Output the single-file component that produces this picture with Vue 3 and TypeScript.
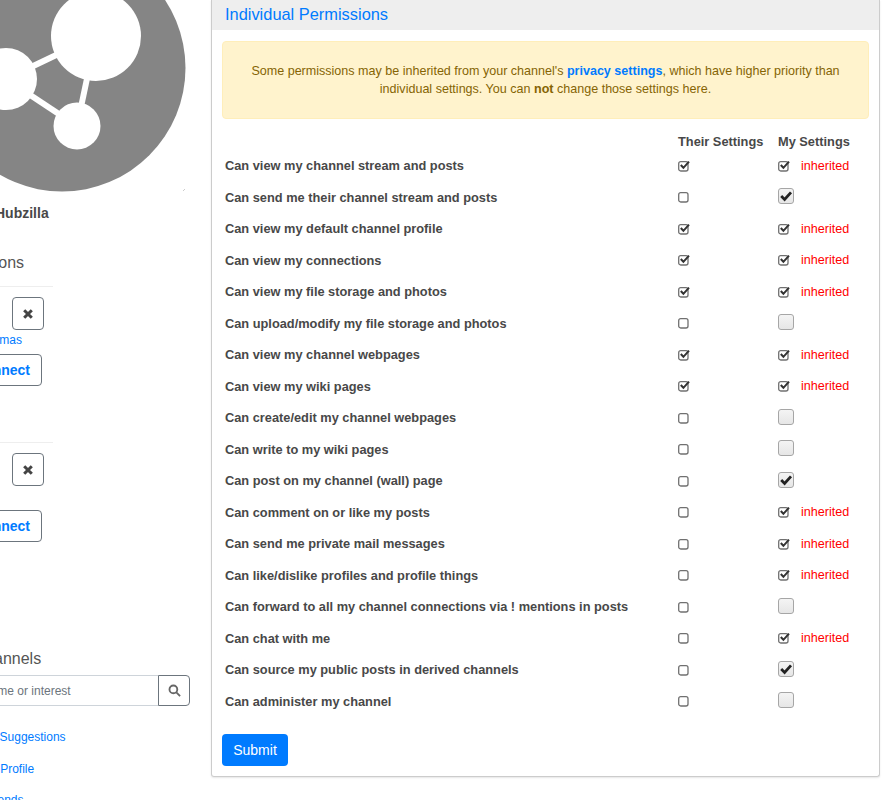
<script setup lang="ts">
// state: 'on' = editable and ticked, 'off' = editable and empty, 'inh' = locked by privacy settings
type MyState = 'on' | 'off' | 'inh'

interface Perm {
  label: string
  their: boolean
  my: MyState
}

const perms: Perm[] = [
  { label: 'Can view my channel stream and posts', their: true, my: 'inh' },
  { label: 'Can send me their channel stream and posts', their: false, my: 'on' },
  { label: 'Can view my default channel profile', their: true, my: 'inh' },
  { label: 'Can view my connections', their: true, my: 'inh' },
  { label: 'Can view my file storage and photos', their: true, my: 'inh' },
  { label: 'Can upload/modify my file storage and photos', their: false, my: 'off' },
  { label: 'Can view my channel webpages', their: true, my: 'inh' },
  { label: 'Can view my wiki pages', their: true, my: 'inh' },
  { label: 'Can create/edit my channel webpages', their: false, my: 'off' },
  { label: 'Can write to my wiki pages', their: false, my: 'off' },
  { label: 'Can post on my channel (wall) page', their: false, my: 'on' },
  { label: 'Can comment on or like my posts', their: false, my: 'inh' },
  { label: 'Can send me private mail messages', their: false, my: 'inh' },
  { label: 'Can like/dislike profiles and profile things', their: false, my: 'inh' },
  { label: 'Can forward to all my channel connections via ! mentions in posts', their: false, my: 'off' },
  { label: 'Can chat with me', their: false, my: 'inh' },
  { label: 'Can source my public posts in derived channels', their: false, my: 'on' },
  { label: 'Can administer my channel', their: false, my: 'off' },
]
</script>

<template>
  <div class="page">
    <aside class="side">
      <svg class="avatar" width="248" height="248" viewBox="0 0 248 248">
        <circle cx="124" cy="124" r="123.5" fill="#858585" />
        <g stroke="#fff" stroke-width="6">
          <line x1="158" y1="92" x2="68" y2="135" />
          <line x1="158" y1="92" x2="139" y2="182" />
          <line x1="68" y1="135" x2="139" y2="182" />
        </g>
        <circle cx="158" cy="92" r="45" fill="#fff" />
        <circle cx="68" cy="135" r="31" fill="#fff" />
        <circle cx="139" cy="182" r="23.5" fill="#fff" />
        <path d="M245 247 L247 245" stroke="#ccc" stroke-width="1" />
      </svg>
      <div class="chan-name">Hubzilla</div>

      <h3 class="widget-title sugg-title">Suggestions</h3>
      <div class="sugg">
        <div class="sugg-top">
          <button class="btn-x">
            <svg width="12" height="12" viewBox="0 0 12 12"><path d="M2.2 2.2 L9.8 9.8 M9.8 2.2 L2.2 9.8" stroke="#444" stroke-width="3" /></svg>
          </button>
        </div>
        <a class="sugg-name">Thomas</a>
        <button class="btn-connect">Connect</button>
      </div>
      <div class="sugg">
        <div class="sugg-top">
          <button class="btn-x">
            <svg width="12" height="12" viewBox="0 0 12 12"><path d="M2.2 2.2 L9.8 9.8 M9.8 2.2 L2.2 9.8" stroke="#444" stroke-width="3" /></svg>
          </button>
        </div>
        <div class="sugg-name"></div>
        <button class="btn-connect">Connect</button>
      </div>

      <h3 class="widget-title find-title">Find Channels</h3>
      <div class="find">
        <input class="find-input" placeholder="Name or interest" />
        <button class="find-btn">
          <svg width="13" height="13" viewBox="0 0 14 14" fill="none" stroke="#666" stroke-width="2">
            <circle cx="5.8" cy="5.8" r="4.2" />
            <path d="M9 9 L13 13" />
          </svg>
        </button>
      </div>
      <ul class="side-links">
        <li>Channel Suggestions</li>
        <li>Random Profile</li>
        <li>Invite Friends</li>
      </ul>
    </aside>

    <main class="section">
      <div class="section-head">Individual Permissions</div>
      <div class="section-body">
        <div class="alert">
          Some permissions may be inherited from your channel's <a class="alert-link">privacy settings</a>, which have higher priority than individual settings. You can <b>not</b> change those settings here.
        </div>

        <div class="perm-table">
          <div class="perm-row head">
            <span></span>
            <span>Their Settings</span>
            <span>My Settings</span>
          </div>
          <div v-for="p in perms" :key="p.label" class="perm-row">
            <span class="perm-label">{{ p.label }}</span>
            <span class="cell">
              <svg class="mini" width="14" height="14" viewBox="0 0 14 14" fill="none">
                <rect x="0.7" y="2.7" width="9.3" height="9.3" rx="2" stroke="#707070" stroke-width="1.3" />
                <path v-if="p.their" d="M2.8 6 L5.4 8.8 L11 2.6" stroke="#333" stroke-width="2" />
              </svg>
            </span>
            <span class="cell">
              <template v-if="p.my === 'inh'">
                <svg class="mini" width="14" height="14" viewBox="0 0 14 14" fill="none">
                  <rect x="0.7" y="2.7" width="9.3" height="9.3" rx="2" stroke="#707070" stroke-width="1.3" />
                  <path d="M2.8 6 L5.4 8.8 L11 2.6" stroke="#333" stroke-width="2" />
                </svg>
                <span class="inherited">inherited</span>
              </template>
              <span v-else class="toggle">
                <svg v-if="p.my === 'on'" width="14" height="14" viewBox="0 0 14 14" fill="none">
                  <path d="M2.2 7 L5.6 10.4 L12 3.4" stroke="#222" stroke-width="2.8" />
                </svg>
              </span>
            </span>
          </div>
        </div>

        <button class="submit">Submit</button>
      </div>
    </main>
  </div>
</template>

<style scoped>
.page {
  display: flex;
  align-items: flex-start;
  height: 800px;
  overflow: hidden;
  font-family: "Liberation Sans", Arial, sans-serif;
  font-size: 12.8px;
  color: #484848;
}
.side {
  flex: none;
  width: 252px;
  margin-left: -62px;
  margin-top: -56px;
  margin-right: 21px;
}
.avatar {
  display: block;
}
.chan-name {
  padding-left: 57px;
  margin-top: 12px;
  font-size: 14px;
  line-height: 18px;
  font-weight: 700;
}
.widget-title {
  margin: 0;
  font-size: 16px;
  font-weight: 400;
  line-height: 20px;
  color: #555;
}
.sugg-title {
  margin-top: 31px;
  margin-left: -2px;
}
.sugg {
  width: 115px;
  padding-top: 10px;
  border-top: 1px solid #eee;
  height: 145px;
}
.sugg-title + .sugg {
  margin-top: 13px;
}
.sugg-top {
  display: flex;
  justify-content: flex-end;
  padding-right: 9px;
}
.btn-x {
  display: flex;
  align-items: center;
  justify-content: center;
  width: 32px;
  height: 33px;
  padding: 0;
  border: 1px solid #6c757d;
  border-radius: 4px;
  background: #fff;
}
.sugg-name {
  display: block;
  height: 16px;
  margin-top: 2px;
  text-align: right;
  padding-right: 31px;
  color: #007bff;
  font-size: 12px;
  line-height: 16px;
}
.btn-connect {
  display: block;
  width: 80px;
  height: 32px;
  margin: 6px 11px 0 auto;
  padding: 0;
  border: 1px solid #6c757d;
  border-radius: 4px;
  background: #fff;
  color: #007bff;
  font: 700 14px "Liberation Sans", Arial, sans-serif;
}
.find-title {
  margin-top: 51px;
}
.find {
  display: flex;
  margin-top: 6px;
  height: 31px;
}
.find-input {
  flex: 1;
  min-width: 0;
  padding: 0 0 0 43px;
  border: 1px solid #ced4da;
  border-right: 0;
  font: 12px "Liberation Sans", Arial, sans-serif;
  outline: none;
}
.find-input::placeholder {
  color: #6c757d;
}
.find-btn {
  display: flex;
  align-items: center;
  justify-content: center;
  width: 32px;
  padding: 0;
  border: 1px solid #6c757d;
  border-radius: 0 4px 4px 0;
  background: #fff;
}
.side-links {
  margin: 16px 0 0;
  padding: 0 0 0 13.5px;
  list-style: none;
  color: #007bff;
  font-size: 12px;
  line-height: 31.5px;
}
.section {
  flex: none;
  width: 669px;
  box-sizing: border-box;
  border: 1px solid #ccc;
  border-top: 0;
  border-radius: 0 0 3px 3px;
  box-shadow: 0 1px 2px rgba(0, 0, 0, 0.1);
}
.section-head {
  height: 30px;
  padding-left: 13px;
  background: #eee;
  color: #007bff;
  font-size: 16.4px;
  line-height: 29px;
}
.section-body {
  padding: 11px 10px 10px;
}
.alert {
  box-sizing: border-box;
  height: 78px;
  padding: 20px 20px;
  border: 1px solid #ffeeba;
  border-radius: 4px;
  background: #fff3cd;
  color: #856404;
  font-size: 12.55px;
  line-height: 18px;
  text-align: center;
}
.alert-link {
  color: #007bff;
  font-weight: 700;
}
.perm-table {
  margin-top: 14.25px;
}
.perm-row {
  display: grid;
  grid-template-columns: 453px 100px 1fr;
  align-items: center;
  height: 31.5px;
  padding-left: 3px;
  font-weight: 700;
}
.perm-row.head {
  height: 16.5px;
}
.perm-label {
  white-space: nowrap;
}
.cell {
  display: flex;
  align-items: center;
}
.mini {
  display: block;
}
.inherited {
  margin-left: 9px;
  color: #ff0000;
  font-size: 12.6px;
  font-weight: 400;
}
.toggle {
  display: flex;
  align-items: center;
  justify-content: center;
  box-sizing: border-box;
  width: 16px;
  height: 16px;
  margin-bottom: 2px;
  border: 1px solid #a6a6a6;
  border-radius: 3px;
  background: linear-gradient(#f4f4f4, #e6e6e6);
}
.submit {
  display: block;
  width: 66px;
  height: 32px;
  margin-top: 17.25px;
  padding: 0;
  border: 0;
  border-radius: 4px;
  background: #007bff;
  color: #fff;
  font: 14px "Liberation Sans", Arial, sans-serif;
}
</style>

<style>
html, body {
  background: #fff;
  overflow: hidden;
}
</style>
